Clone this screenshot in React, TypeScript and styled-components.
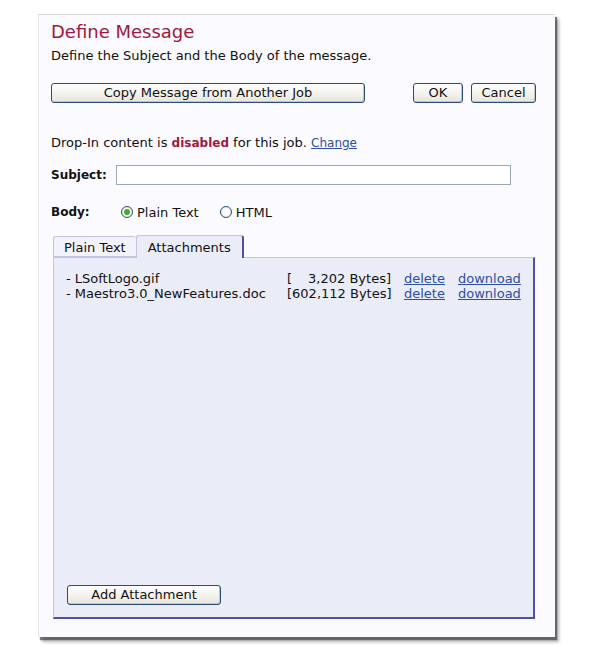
import React from "react";
import styled, { createGlobalStyle } from "styled-components";

const Global = createGlobalStyle`
  html, body { margin: 0; padding: 0; background: #ffffff; }
  body { font-family: "DejaVu Sans", Verdana, sans-serif; font-size: 13px; color: #111; }
`;

const Page = styled.div`
  padding: 14px 0 0 38px;
  width: 610px;
  height: 657px;
  box-sizing: border-box;
`;

const Panel = styled.div`
  width: 517px;
  height: 623px;
  box-sizing: border-box;
  background: #fbfafe;
  border-top: 1px solid #d8d8dc;
  border-left: 1px solid #e4e4e8;
  box-shadow: 2px 3px 1px rgba(60, 60, 60, 0.65), 4px 5px 3px rgba(0, 0, 0, 0.3);
  padding: 6px 19px 0 12px;
  display: flex;
  flex-direction: column;
`;

const Title = styled.h1`
  margin: 0;
  font-size: 18px;
  font-weight: normal;
  color: #a3173d;
  line-height: 22px;
`;

const Intro = styled.p`
  margin: 5px 0 0 0;
  line-height: 16px;
`;

const ButtonRow = styled.div`
  display: flex;
  align-items: center;
  margin-top: 19px;
  height: 20px;
`;

const Spacer = styled.div`
  flex: 1;
`;

const Button = styled.button<{ $w: number }>`
  width: ${(p) => p.$w}px;
  height: 20px;
  box-sizing: border-box;
  border: 1px solid #2a4a7c;
  border-radius: 3px;
  background: linear-gradient(#ffffff, #f1f0ea 60%, #e6e4dc);
  font-family: "DejaVu Sans", Verdana, sans-serif;
  font-size: 13px;
  line-height: 16px;
  color: #111;
  padding: 0;
  margin-left: ${(p) => (p.$w > 100 ? 0 : 8)}px;
  box-shadow: inset -1px -1px 0 #c8c6bc;
`;

const DropIn = styled.p`
  margin: 32px 0 0 0;
  line-height: 16px;
`;

const Disabled = styled.b`
  color: #a3173d;
  font-size: 12px;
`;

const SmallLink = styled.a`
  font-size: 12px;
  color: #2c4ea6;
  text-decoration: underline;
`;

const Link = styled.a<{ $ml?: number }>`
  color: #2c4ea6;
  text-decoration: underline;
  margin-left: ${(p) => p.$ml ?? 0}px;
`;

const FieldRow = styled.div<{ $mt: number }>`
  display: flex;
  align-items: center;
  margin-top: ${(p) => p.$mt}px;
  height: 20px;
`;

const Label = styled.label<{ $w: number }>`
  font-weight: bold;
  font-size: 12px;
  width: ${(p) => p.$w}px;
`;

const TextInput = styled.input`
  width: 395px;
  height: 20px;
  box-sizing: border-box;
  border: 1px solid #9aaabb;
  background: #fff;
  padding: 0 3px;
  margin-left: 0;
  font-family: inherit;
  font-size: 13px;
`;

const RadioOption = styled.span`
  display: inline-flex;
  align-items: center;
  gap: 4px;
  margin-right: 21px;
`;

const RadioDot = styled.span<{ $on?: boolean }>`
  width: 12px;
  height: 12px;
  box-sizing: border-box;
  border-radius: 50%;
  border: 1px solid #2b4d7b;
  background: radial-gradient(circle, #ffffff 40%, #dcdcd4);
  display: inline-flex;
  align-items: center;
  justify-content: center;
  &::after {
    content: "";
    width: 6px;
    height: 6px;
    border-radius: 50%;
    background: ${(p) => (p.$on ? "#3fae2a" : "transparent")};
  }
`;

const Tabs = styled.div`
  margin-top: 13px;
  margin-left: 2px;
  display: flex;
  align-items: flex-end;
  height: 22px;
  position: relative;
  z-index: 1;
`;

const Tab = styled.div<{ $active?: boolean }>`
  box-sizing: border-box;
  height: ${(p) => (p.$active ? 23 : 21)}px;
  padding: 0 ${(p) => (p.$active ? 11 : 10)}px;
  display: flex;
  align-items: center;
  border: 1px solid #c4c4e0;
  border-bottom: ${(p) => (p.$active ? "none" : "1px solid #c4c4e0")};
  border-right: ${(p) => (p.$active ? "2px solid #4f4fa0" : "none")};
  border-radius: 3px 3px 0 0;
  background: ${(p) => (p.$active ? "#eaedf7" : "#f2f2fa")};
  padding-top: ${(p) => (p.$active ? 0 : 1)}px;
  margin-bottom: ${(p) => (p.$active ? -1 : 0)}px;
`;

const TabBody = styled.div`
  margin-left: 2px;
  width: 482px;
  height: 362px;
  box-sizing: border-box;
  background: #eaedf7;
  border-top: 1px solid #c4c4e0;
  border-left: 1px solid #c4c4e0;
  border-right: 2px solid #4f4fa0;
  border-bottom: 2px solid #4f4fa0;
  padding: 13px 0 12px 12px;
  display: flex;
  flex-direction: column;
`;

const FileTable = styled.div`
  display: grid;
  grid-template-columns: 221px 104px 67px auto;
  line-height: 15px;
  white-space: nowrap;
`;

const Size = styled.span`
  display: flex;
  justify-content: space-between;
  white-space: pre;
`;

const AddButton = styled(Button)`
  margin-top: auto;
  margin-left: 1px;
`;

const files = [
  { name: "- LSoftLogo.gif", size: "3,202" },
  { name: "- Maestro3.0_NewFeatures.doc", size: "602,112" },
];

export default function App() {
  return (
    <Page>
      <Global />
      <Panel>
        <Title>Define Message</Title>
        <Intro>Define the Subject and the Body of the message.</Intro>
        <ButtonRow>
          <Button $w={314}>Copy Message from Another Job</Button>
          <Spacer />
          <Button $w={50}>OK</Button>
          <Button $w={65}>Cancel</Button>
        </ButtonRow>
        <DropIn>
          Drop-In content is <Disabled>disabled</Disabled> for this job. <SmallLink href="#">Change</SmallLink>
        </DropIn>
        <FieldRow $mt={14}>
          <Label $w={65}>Subject:</Label>
          <TextInput type="text" />
        </FieldRow>
        <FieldRow $mt={17}>
          <Label $w={70}>Body:</Label>
          <RadioOption>
            <RadioDot $on />
            Plain Text
          </RadioOption>
          <RadioOption>
            <RadioDot />
            HTML
          </RadioOption>
        </FieldRow>
        <Tabs>
          <Tab>Plain Text</Tab>
          <Tab $active>Attachments</Tab>
        </Tabs>
        <TabBody>
          <FileTable>
            {files.map((f) => (
              <React.Fragment key={f.name}>
                <span>{f.name}</span>
                <Size>
                  <span>[</span>
                  <span>{f.size} Bytes]</span>
                </Size>
                <Link href="#" $ml={13}>delete</Link>
                <Link href="#">download</Link>
              </React.Fragment>
            ))}
          </FileTable>
          <AddButton $w={154}>Add Attachment</AddButton>
        </TabBody>
      </Panel>
    </Page>
  );
}
